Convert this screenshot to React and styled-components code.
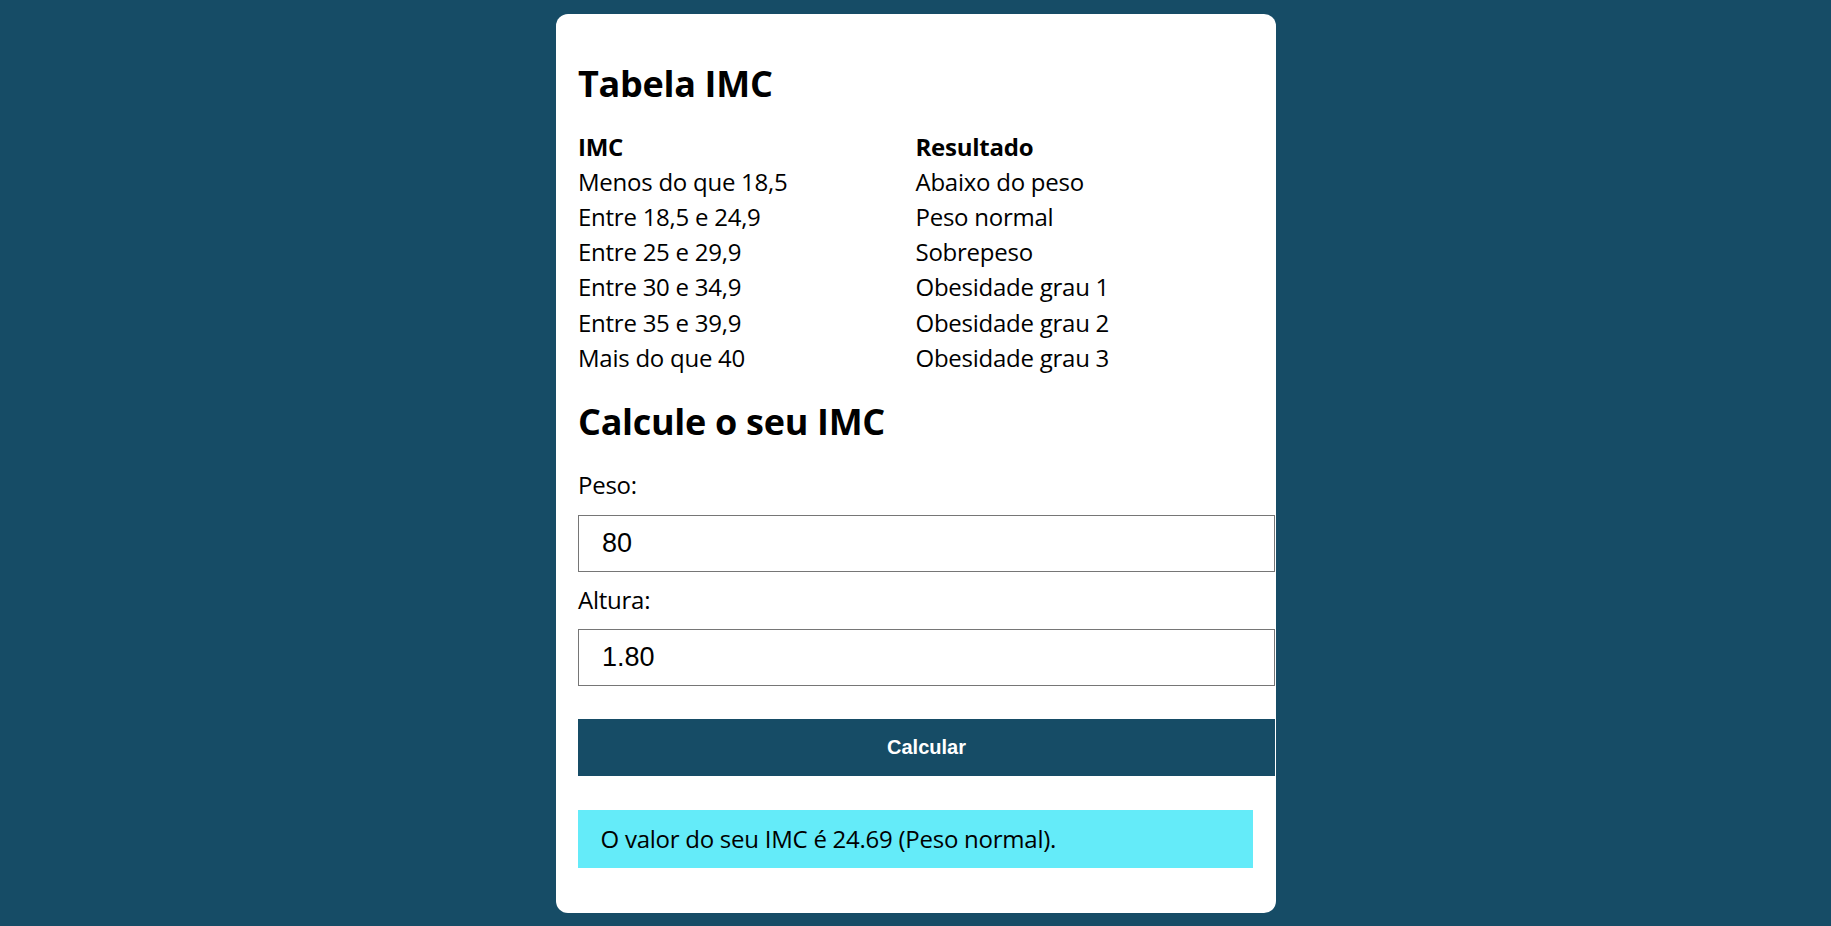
import React from "react";
import styled, { createGlobalStyle } from "styled-components";

const GlobalStyle = createGlobalStyle`
  body {
    margin: 0;
    background: #164c66;
    font-family: "Open Sans", "Liberation Sans", sans-serif;
    color: #000;
  }
`;

const Page = styled.div`
  display: flex;
  justify-content: center;
  padding: 14px 0 13px;
`;

const Card = styled.main`
  width: 720px;
  box-sizing: border-box;
  background: #fff;
  border-radius: 12px;
  padding: 0 22.5px 45.6px;
  display: flex;
  flex-direction: column;
  align-items: flex-start;
`;

const Title = styled.h2`
  margin: ${(p) => p.$top}px 0 0;
  font-size: 36px;
  font-weight: 700;
  line-height: 49px;
  letter-spacing: -0.3px;
`;

const Table = styled.div`
  margin-top: 21px;
  width: 100%;
  display: grid;
  grid-template-columns: 1fr 1fr;
  font-size: 24px;
  line-height: 35.17px;
  letter-spacing: -0.25px;
`;

const Cell = styled.div`
  font-weight: ${(p) => (p.$head ? 700 : 400)};
  white-space: nowrap;
`;

const Label = styled.label`
  display: block;
  margin-top: ${(p) => p.$top}px;
  font-size: 24px;
  line-height: 32.7px;
  letter-spacing: -0.25px;
`;

const Input = styled.input`
  display: block;
  margin-top: 13px;
  width: calc(100% + 22px);
  height: 56.7px;
  box-sizing: border-box;
  padding: 0 0 0 23px;
  border: 1.5px solid #767676;
  font-family: "Liberation Sans", Arial, sans-serif;
  font-size: 27px;
  color: #000;
  background: #fff;
  outline: none;
`;

const Button = styled.button`
  margin-top: 33px;
  width: calc(100% + 22px);
  height: 56.7px;
  border: none;
  background: #164c66;
  color: #fff;
  font-family: "Liberation Sans", Arial, sans-serif;
  font-weight: 700;
  font-size: 20px;
  cursor: pointer;
`;

const Result = styled.p`
  margin: 34.3px 0 0;
  width: 100%;
  box-sizing: border-box;
  padding: 12.5px 22.5px;
  background: #64ebf9;
  font-size: 24px;
  line-height: 32.7px;
  letter-spacing: -0.25px;
`;

const rows = [
  ["Menos do que 18,5", "Abaixo do peso"],
  ["Entre 18,5 e 24,9", "Peso normal"],
  ["Entre 25 e 29,9", "Sobrepeso"],
  ["Entre 30 e 34,9", "Obesidade grau 1"],
  ["Entre 35 e 39,9", "Obesidade grau 2"],
  ["Mais do que 40", "Obesidade grau 3"],
];

export default function App() {
  return (
    <>
      <GlobalStyle />
      <Page>
        <Card>
          <Title $top={44.8}>Tabela IMC</Title>
          <Table>
            <Cell $head>IMC</Cell>
            <Cell $head>Resultado</Cell>
            {rows.map(([imc, res]) => (
              <React.Fragment key={imc}>
                <Cell>{imc}</Cell>
                <Cell>{res}</Cell>
              </React.Fragment>
            ))}
          </Table>
          <Title $top={21.5}>Calcule o seu IMC</Title>
          <Label $top={23.8} htmlFor="peso">Peso:</Label>
          <Input id="peso" type="text" defaultValue="80" />
          <Label $top={12} htmlFor="altura">Altura:</Label>
          <Input id="altura" type="text" defaultValue="1.80" />
          <Button type="button">Calcular</Button>
          <Result>O valor do seu IMC é 24.69 (Peso normal).</Result>
        </Card>
      </Page>
    </>
  );
}
